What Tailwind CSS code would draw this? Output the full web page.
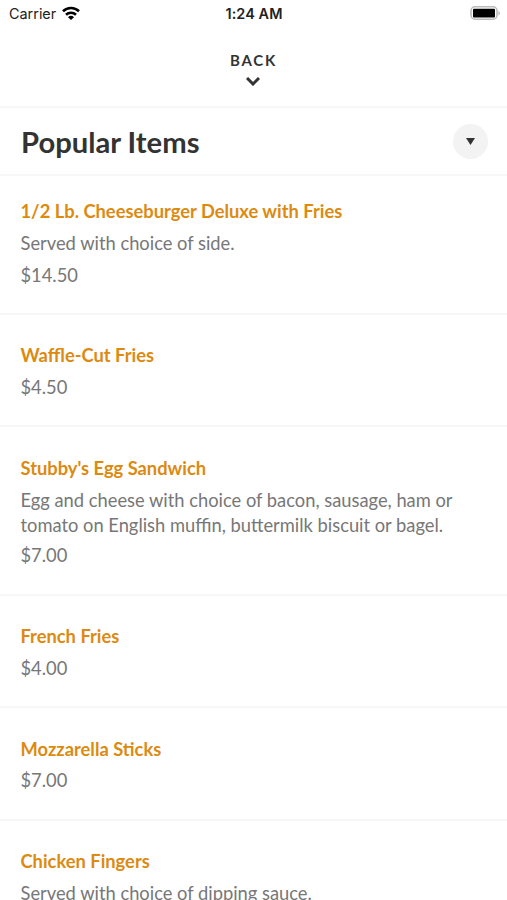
<!DOCTYPE html>
<html lang="en">
<head>
  <meta charset="UTF-8" />
  <meta name="viewport" content="width=device-width, initial-scale=1.0" />
  <title>Popular Items</title>
  <script src="https://cdn.jsdelivr.net/npm/@tailwindcss/browser@4"></script>
</head>
<body class="bg-white font-[Lato,sans-serif] text-[#777]">
  <div class="h-[900px] overflow-hidden">
    <!-- Status bar -->
    <div class="grid h-7 grid-cols-3 items-center pl-[9px] pr-[7px] font-[Inter,sans-serif] text-[14.4px] text-[#222]">
      <div class="flex items-center gap-1.5">
        <span>Carrier</span>
        <svg class="h-[14px] w-[18px] -translate-y-px" viewBox="0 0 18 14" fill="none" stroke="#000" stroke-width="2.6">
          <path d="M1 5.200a11.500 11.500 0 0 1 16 0M4 8.700a7.200 7.200 0 0 1 10 0" />
          <path d="M9 14 6 11.200a4.300 4.300 0 0 1 6 0z" fill="#000" stroke="none" />
        </svg>
      </div>
      <div class="-ml-px text-center font-semibold tracking-[0.1px]">1:24 AM</div>
      <div class="flex justify-end">
        <svg class="h-[14px] w-[30px] -translate-y-px" viewBox="0 0 30 14">
          <rect x="1" y=".8" width="26" height="12.400" rx="4" fill="#fff" stroke="#bbb" stroke-width="1.6" />
          <rect x="3" y="2.800" width="22" height="8.800" rx="1" />
          <path d="M28.500 4.800q2.500 2.500 0 5z" fill="#aaa" />
        </svg>
      </div>
    </div>

    <button class="flex h-20 w-full flex-col items-center border-b-2 border-[#f7f7f7] pt-[23px] text-[#333]">
      <span class="text-[15px] leading-[18px] font-bold tracking-[1.8px]">BACK</span>
      <svg class="mt-2 mr-px h-[9px] w-[14px]" viewBox="0 0 14 9" fill="none" stroke="#333" stroke-width="3"><path d="m1 1 6 6 6-6" /></svg>
    </button>

    <div class="flex h-[68px] items-center justify-between border-b-2 border-[#f7f7f7] pl-[21px] pr-[19px]">
      <h1 class="pt-0.5 text-[29.2px] font-bold text-[#333]">Popular Items</h1>
      <button class="flex size-[35px] items-center justify-center rounded-full bg-[#f3f3f3]">
        <svg class="h-[7px] w-[9px]" viewBox="0 0 9 7" fill="#333"><path d="M0 0h9L4.500 7z" /></svg>
      </button>
    </div>

    <div class="text-[18.32px] leading-[25px]">
      <div class="flex h-[139px] flex-col gap-[7px] border-b-2 border-[#f7f7f7] px-[20.5px] pt-[23px]">
        <h2 class="font-bold text-[#dc8a10]">1/2 Lb. Cheeseburger Deluxe with Fries</h2>
        <p>Served with choice of side.</p>
        <p>$14.50</p>
      </div>
      <div class="flex h-28 flex-col gap-[7px] border-b-2 border-[#f7f7f7] px-[20.5px] pt-7">
        <h2 class="font-bold text-[#dc8a10]">Waffle-Cut Fries</h2>
        <p>$4.50</p>
      </div>
      <div class="flex h-[169px] flex-col border-b-2 border-[#f7f7f7] px-[20.5px] pt-[29px]">
        <h2 class="font-bold text-[#dc8a10]">Stubby's Egg Sandwich</h2>
        <p class="mt-[7px] leading-[24.5px]">Egg and cheese with choice of bacon, sausage, ham or<br />tomato on English muffin, buttermilk biscuit or bagel.</p>
        <p class="mt-1.5">$7.00</p>
      </div>
      <div class="flex h-28 flex-col gap-[7px] border-b-2 border-[#f7f7f7] px-[20.5px] pt-7">
        <h2 class="font-bold text-[#dc8a10]">French Fries</h2>
        <p>$4.00</p>
      </div>
      <div class="flex h-[113px] flex-col gap-1.5 border-b-2 border-[#f7f7f7] px-[20.5px] pt-[29px]">
        <h2 class="font-bold text-[#dc8a10]">Mozzarella Sticks</h2>
        <p>$7.00</p>
      </div>
      <div class="flex flex-col gap-[7px] px-[20.5px] pt-7">
        <h2 class="font-bold text-[#dc8a10]">Chicken Fingers</h2>
        <p>Served with choice of dipping sauce.</p>
      </div>
    </div>
  </div>
</body>
</html>
